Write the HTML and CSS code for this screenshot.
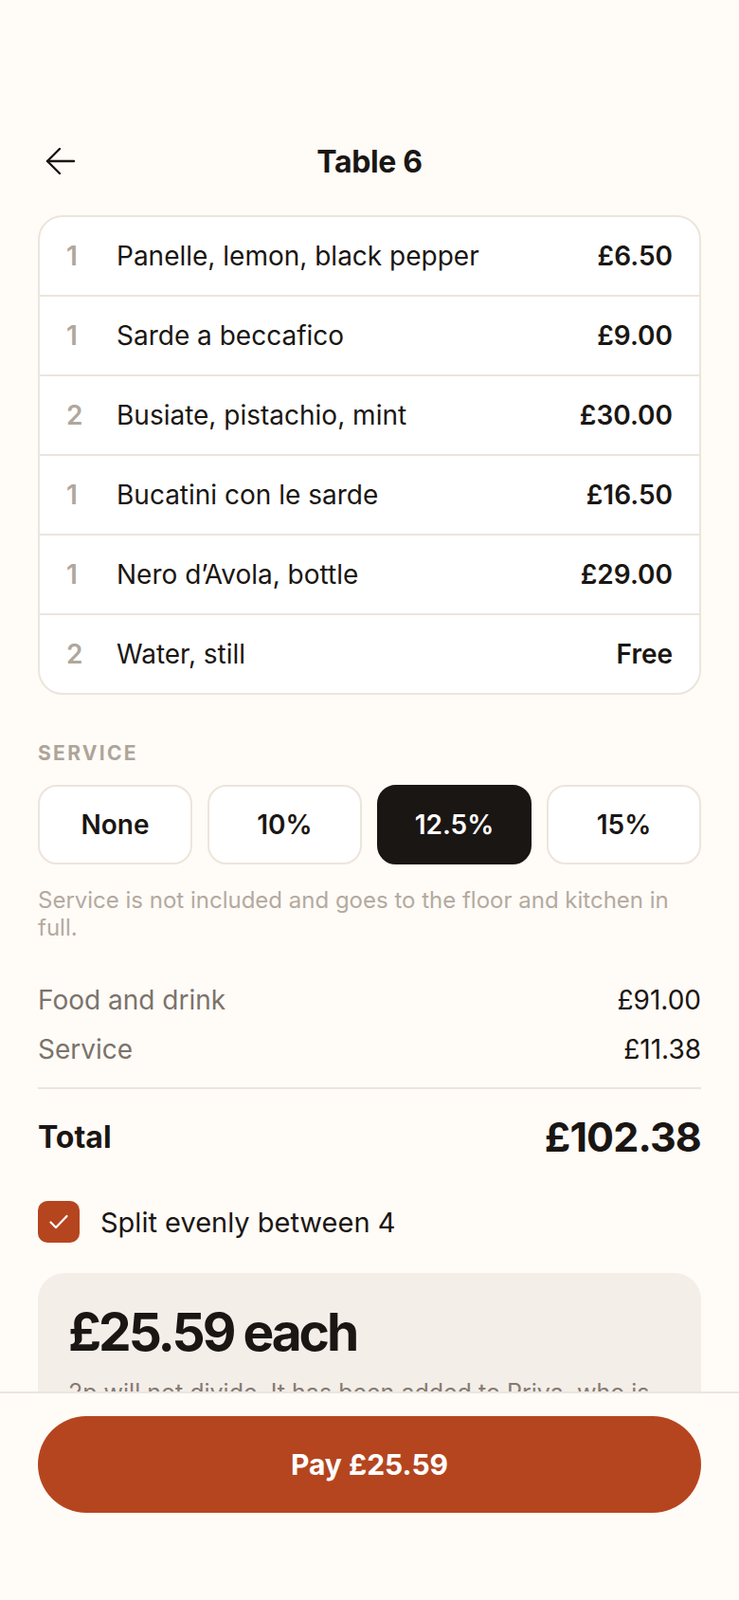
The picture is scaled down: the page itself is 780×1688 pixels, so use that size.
FILE: index.html
```html
<!DOCTYPE html>
<html lang="en">
<head>
    <meta charset="UTF-8">
    <meta name="viewport" content="width=device-width, initial-scale=1.0">
    <title>Table 6 - Bill</title>
    <link rel="stylesheet" href="styles.css">
</head>
<body>
    <div class="screen">
        <main class="content">
            <header class="topbar">
                <button class="back" aria-label="Back">
                    <svg width="32" height="28" viewBox="0 0 32 28" fill="none" stroke="currentColor" stroke-width="2.4" stroke-linecap="round" stroke-linejoin="round">
                        <path d="M30 14H2"/>
                        <path d="M15 1L2 14l13 13"/>
                    </svg>
                </button>
                <h1>Table 6</h1>
            </header>

            <ul class="items">
                <li class="item"><span class="qty">1</span><span class="name">Panelle, lemon, black pepper</span><span class="price">£6.50</span></li>
                <li class="item"><span class="qty">1</span><span class="name">Sarde a beccafico</span><span class="price">£9.00</span></li>
                <li class="item"><span class="qty">2</span><span class="name">Busiate, pistachio, mint</span><span class="price">£30.00</span></li>
                <li class="item"><span class="qty">1</span><span class="name">Bucatini con le sarde</span><span class="price">£16.50</span></li>
                <li class="item"><span class="qty">1</span><span class="name">Nero d’Avola, bottle</span><span class="price">£29.00</span></li>
                <li class="item"><span class="qty">2</span><span class="name">Water, still</span><span class="price">Free</span></li>
            </ul>

            <section class="service">
                <h2 class="label">Service</h2>
                <div class="tips">
                    <button class="tip">None</button>
                    <button class="tip">10%</button>
                    <button class="tip active">12.5%</button>
                    <button class="tip">15%</button>
                </div>
                <p class="note">Service is not included and goes to the floor and kitchen in full.</p>
            </section>

            <section class="summary">
                <div class="line"><span>Food and drink</span><span class="amount">£91.00</span></div>
                <div class="line"><span>Service</span><span class="amount">£11.38</span></div>
                <div class="total"><span>Total</span><span class="total-amount">£102.38</span></div>
            </section>

            <label class="split">
                <span class="check">
                    <svg width="22" height="22" viewBox="0 0 22 22" fill="none" stroke="#fff" stroke-width="2.2" stroke-linecap="round" stroke-linejoin="round">
                        <path d="M2.5 11.5l5.5 5.5L19.5 5"/>
                    </svg>
                </span>
                Split evenly between 4
            </label>

            <div class="each">
                <p class="each-amount">£25.59 each</p>
                <p class="each-note">2p will not divide. It has been added to Priya, who is first on the bill.</p>
            </div>
        </main>

        <footer class="paybar">
            <button class="pay">Pay £25.59</button>
        </footer>
    </div>
</body>
</html>
```

FILE: styles.css
```css
/* Bill screen */
body {
    margin: 0;
    background: #fffbf7;
    color: #1a1613;
    font-family: Inter, "Noto Sans", sans-serif;
}

.screen {
    height: 1688px;
    display: flex;
    flex-direction: column;
}

.content {
    flex: 1;
    overflow: hidden;
    padding: 131px 40px 0;
}

button {
    font-family: inherit;
    cursor: pointer;
}

.topbar {
    height: 78px;
    display: flex;
    align-items: center;
    justify-content: center;
    position: relative;
    margin-bottom: 18px;
}

.back {
    position: absolute;
    left: 8px;
    top: 25px;
    padding: 0;
    border: none;
    background: none;
    color: #1a1613;
    display: flex;
}

.topbar h1 {
    margin: 0;
    font-size: 32px;
    font-weight: 700;
    letter-spacing: -0.01em;
}

.items {
    list-style: none;
    margin: 0;
    padding: 0;
    background: #fff;
    border: 2px solid #ece5dc;
    border-radius: 26px;
    overflow: hidden;
}

.item {
    height: 82px;
    display: flex;
    align-items: center;
    padding: 0 28px;
    font-size: 28px;
}

.item + .item {
    border-top: 2px solid #ece5dc;
}

.qty {
    width: 53px;
    color: #b0a79c;
    font-weight: 600;
}

.name {
    flex: 1;
}

.price {
    font-weight: 600;
}

.service {
    margin-top: 50px;
}

.label {
    margin: 0 0 21px;
    font-size: 21px;
    line-height: 24px;
    font-weight: 700;
    letter-spacing: 0.11em;
    text-transform: uppercase;
    color: #aea599;
}

.tips {
    display: grid;
    grid-template-columns: repeat(4, 1fr);
    gap: 16px;
}

.tip {
    height: 84px;
    border: 2px solid #ece5dc;
    border-radius: 20px;
    background: #fff;
    color: #1a1613;
    font-size: 28px;
    font-weight: 600;
}

.tip.active {
    background: #1a1613;
    border-color: #1a1613;
    color: #fff;
}

.note {
    margin: 23px 0 0;
    font-size: 24px;
    line-height: 29px;
    color: #b3aaa0;
}

.summary {
    margin-top: 44px;
}

.line {
    display: flex;
    justify-content: space-between;
    font-size: 28px;
    line-height: 36px;
    color: #7b736b;
    margin-bottom: 16px;
}

.line .amount {
    color: #1a1613;
}

.total {
    display: flex;
    justify-content: space-between;
    align-items: center;
    border-top: 2px solid #ebe5dc;
    margin-top: 22px;
    padding-top: 24px;
    height: 52px;
    font-size: 32px;
    font-weight: 700;
}

.total-amount {
    font-size: 43px;
    letter-spacing: -0.02em;
}

.split {
    display: flex;
    align-items: center;
    gap: 22px;
    margin-top: 42px;
    font-size: 29px;
}

.check {
    width: 44px;
    height: 44px;
    border-radius: 10px;
    background: #b5451f;
    display: flex;
    align-items: center;
    justify-content: center;
}

.each {
    margin-top: 32px;
    background: #f4eee9;
    border-radius: 28px;
    padding: 30px 32px;
}

.each-amount {
    margin: 0;
    font-size: 55px;
    line-height: 64px;
    font-weight: 700;
    letter-spacing: -0.055em;
}

.each-note {
    margin: 15px 0 0;
    font-size: 25px;
    line-height: 34px;
    color: #847b72;
}

.paybar {
    border-top: 2px solid #ece5dc;
    background: #fffbf7;
    padding: 24px 40px 92px;
}

.pay {
    width: 100%;
    height: 102px;
    border: none;
    border-radius: 51px;
    background: #b5451f;
    color: #fff;
    font-size: 30px;
    font-weight: 700;
}
```
